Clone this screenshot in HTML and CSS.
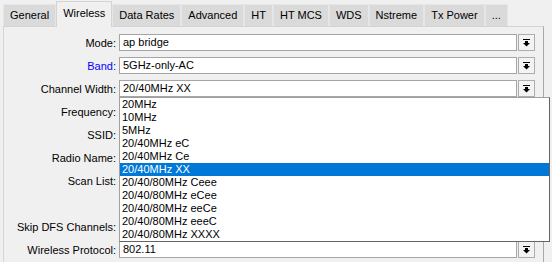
FILE: index.html
```html
<!DOCTYPE html>
<html lang="en">
<head>
  <meta charset="UTF-8">
  <title>Wireless</title>
  <link rel="stylesheet" href="styles.css">
</head>
<body>

  <div class="tabs">
    <div class="tab">General</div>
    <div class="tab active">Wireless</div>
    <div class="tab">Data Rates</div>
    <div class="tab">Advanced</div>
    <div class="tab">HT</div>
    <div class="tab">HT MCS</div>
    <div class="tab">WDS</div>
    <div class="tab">Nstreme</div>
    <div class="tab">Tx Power</div>
    <div class="tab">...</div>
  </div>

  <div class="panel">
    <div class="row">
      <label>Mode:</label>
      <div class="field">ap bridge</div>
      <div class="btn"><svg width="7" height="8" viewBox="0 0 7 8"><rect x="0" y="0" width="7" height="1"/><rect x="2" y="2" width="3" height="2"/><polygon points="0,4 7,4 3.5,7.5"/></svg></div>
    </div>
    <div class="row">
      <label class="blue">Band:</label>
      <div class="field">5GHz-only-AC</div>
      <div class="btn"><svg width="7" height="8" viewBox="0 0 7 8"><rect x="0" y="0" width="7" height="1"/><rect x="2" y="2" width="3" height="2"/><polygon points="0,4 7,4 3.5,7.5"/></svg></div>
    </div>
    <div class="row">
      <label>Channel Width:</label>
      <div class="field">20/40MHz XX
        <ul class="dropdown">
          <li>20MHz</li>
          <li>10MHz</li>
          <li>5MHz</li>
          <li>20/40MHz eC</li>
          <li>20/40MHz Ce</li>
          <li class="selected">20/40MHz XX</li>
          <li>20/40/80MHz Ceee</li>
          <li>20/40/80MHz eCee</li>
          <li>20/40/80MHz eeCe</li>
          <li>20/40/80MHz eeeC</li>
          <li>20/40/80MHz XXXX</li>
        </ul>
      </div>
      <div class="btn"><svg width="7" height="8" viewBox="0 0 7 8"><rect x="0" y="0" width="7" height="1"/><rect x="2" y="2" width="3" height="2"/><polygon points="0,4 7,4 3.5,7.5"/></svg></div>
    </div>
    <div class="row">
      <label>Frequency:</label>
      <div class="field"></div>
    </div>
    <div class="row">
      <label>SSID:</label>
      <div class="field"></div>
    </div>
    <div class="row">
      <label>Radio Name:</label>
      <div class="field"></div>
    </div>
    <div class="row tall">
      <label>Scan List:</label>
      <div class="field"></div>
    </div>
    <div class="row">
      <label>Skip DFS Channels:</label>
      <div class="field"></div>
    </div>
    <div class="row">
      <label>Wireless Protocol:</label>
      <div class="field">802.11</div>
      <div class="btn"><svg width="7" height="8" viewBox="0 0 7 8"><rect x="0" y="0" width="7" height="1"/><rect x="2" y="2" width="3" height="2"/><polygon points="0,4 7,4 3.5,7.5"/></svg></div>
    </div>
  </div>

</body>
</html>
```
FILE: styles.css
```css
* {
  margin: 0;
  padding: 0;
  box-sizing: border-box;
}

body {
  font-family: "Liberation Sans", Arial, sans-serif;
  font-size: 11px;
  color: #000;
  background-color: #f0f0f0;
  overflow: hidden;
}

/* Onglets */
.tabs {
  display: flex;
  align-items: flex-end;
  height: 26px;
  padding-left: 3px;
}

.tab {
  height: 22px;
  line-height: 21px;
  padding: 0 6px;
  background-color: #dadada;
  border: 1px solid #e6e6e6;
  border-bottom: none;
  white-space: nowrap;
}

.tab.active {
  height: 26px;
  line-height: 22px;
  margin-bottom: -1px;
  position: relative;
  background-color: #f0f0f0;
  border-color: #d4d4d4;
}

/* Panneau */
.panel {
  margin: 0 8px 0 3px;
  height: 240px;
  border: 1px solid #d4d4d4;
  border-right-color: #a8a8a8;
  padding-top: 7px;
}

.row {
  display: flex;
  align-items: center;
  height: 17px;
  margin-bottom: 6px;
}

.row.tall {
  margin-bottom: 29px;
}

.row label {
  width: 112px;
  margin-right: 3px;
  text-align: right;
  white-space: nowrap;
}

.row label.blue {
  color: #0000ff;
}

.field {
  position: relative;
  width: 398px;
  height: 17px;
  line-height: 15px;
  padding-left: 3px;
  background-color: #fff;
  border: 1px solid #a5a5a5;
}

.btn {
  width: 17px;
  height: 17px;
  margin-left: 1px;
  display: flex;
  align-items: center;
  justify-content: center;
  background-color: #f3f3f3;
  border: 1px solid #adadad;
}

/* Liste déroulante */
.dropdown {
  list-style: none;
  position: absolute;
  left: -1px;
  top: 16px;
  z-index: 5;
  width: 431px;
  background-color: #fff;
  border: 1px solid #a0a0a0;
  border-right-color: #646464;
  border-bottom-color: #646464;
}

.dropdown li {
  height: 13px;
  line-height: 13px;
  padding-left: 2px;
  white-space: nowrap;
}

.dropdown li.selected {
  background-color: #0078d7;
  color: #fff;
}
```
